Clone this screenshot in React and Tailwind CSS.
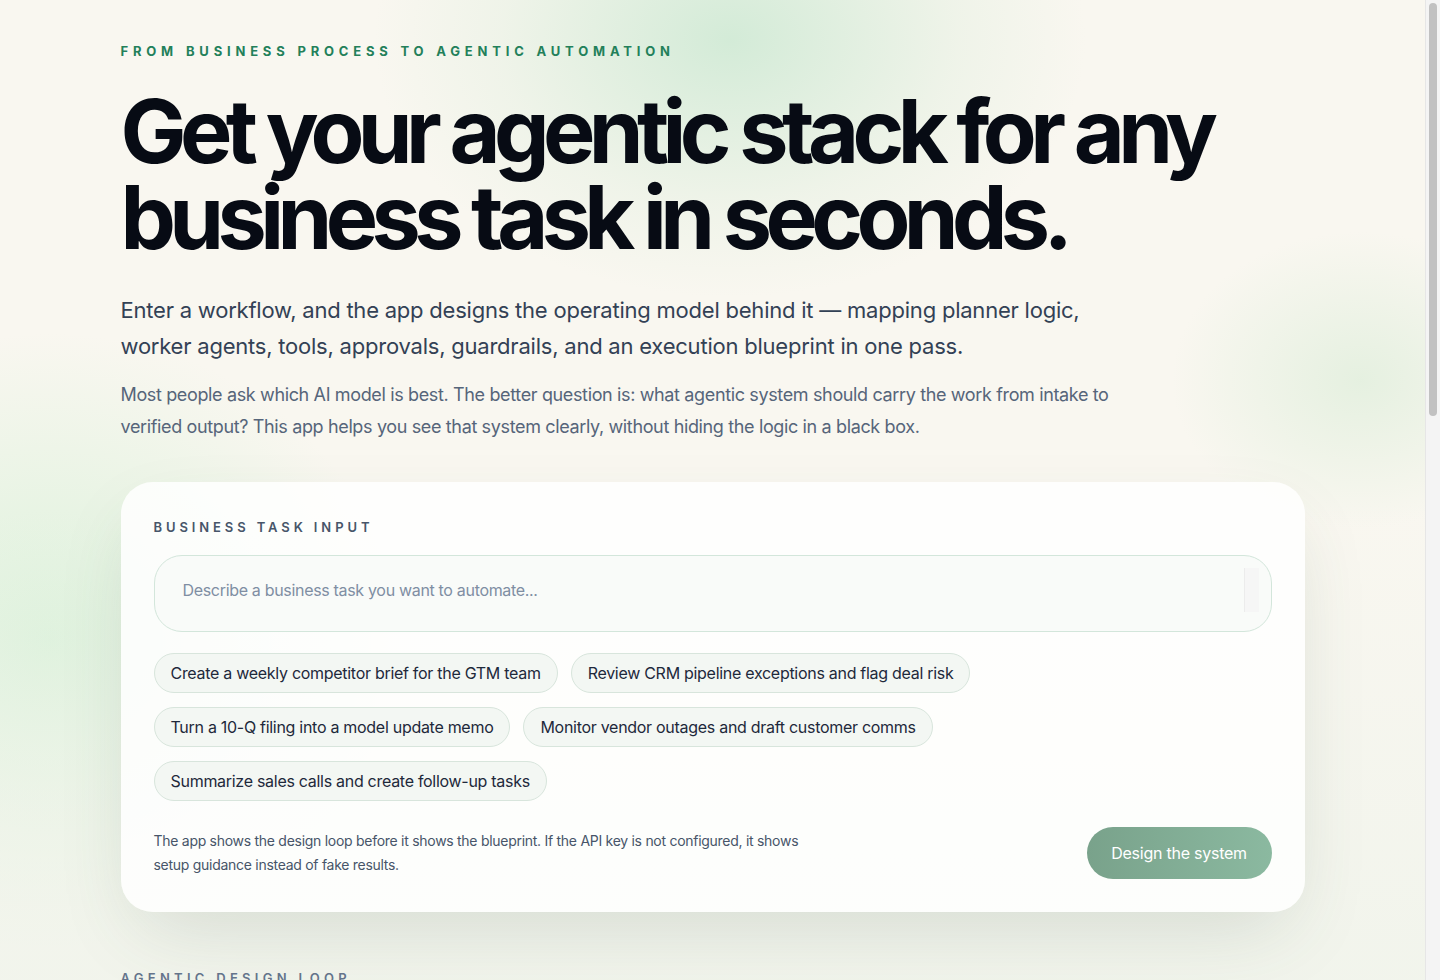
const examples = [
  'Create a weekly competitor brief for the GTM team',
  'Review CRM pipeline exceptions and flag deal risk',
  'Turn a 10-Q filing into a model update memo',
  'Monitor vendor outages and draft customer comms',
  'Summarize sales calls and create follow-up tasks',
]

export default function App() {
  return (
    <div
      className="relative min-h-[2300px] overflow-hidden bg-[#f9f7f0] pr-[15px] text-slate-900"
      style={{ fontFamily: 'Inter, "Liberation Sans", sans-serif' }}
    >
      {/* soft background glows */}
      <div className="pointer-events-none absolute -top-[220px] left-[370px] h-[520px] w-[720px] rounded-full bg-[radial-gradient(ellipse_at_center,_rgba(180,225,195,0.55)_0%,_rgba(200,230,205,0.2)_45%,_transparent_70%)]" />
      <div className="pointer-events-none absolute top-[330px] -left-[300px] h-[620px] w-[700px] rounded-full bg-[radial-gradient(ellipse_at_center,_rgba(200,238,205,0.6)_0%,_transparent_70%)]" />
      <div className="pointer-events-none absolute top-[230px] left-[1170px] h-[300px] w-[380px] rounded-full bg-[radial-gradient(ellipse_at_center,_rgba(205,232,205,0.45)_0%,_transparent_70%)]" />
      <div className="pointer-events-none absolute top-[500px] left-0 right-0 h-[700px] bg-gradient-to-b from-transparent to-[#eef3ea]" />

      <main className="relative mx-auto w-[1184px] pt-[42px]">
        <p className="text-[13px] font-bold uppercase tracking-[0.37em] text-[#23805a]">
          From business process to agentic automation
        </p>

        <h1 className="mt-[26px] text-[88px] font-bold leading-[86px] tracking-[-0.075em] text-[#070b14]">
          Get your agentic stack for any
          <br />
          business task in seconds.
        </h1>

        <p className="mt-[32px] max-w-[980px] text-[22px] leading-[36px] tracking-[-0.01em] text-[#334155]">
          Enter a workflow, and the app designs the operating model behind it — mapping planner logic,
          worker agents, tools, approvals, guardrails, and an execution blueprint in one pass.
        </p>

        <p className="mt-[15px] max-w-[1010px] text-[18px] leading-[32px] tracking-[-0.02em] text-[#56657a]">
          Most people ask which AI model is best. The better question is: what agentic system should carry the
          work from intake to verified output? This app helps you see that system clearly, without hiding the
          logic in a black box.
        </p>

        <section className="mt-[39px] rounded-[32px] bg-white/85 px-[33px] pb-[33px] pt-[36px] shadow-[0_30px_80px_-20px_rgba(60,90,70,0.18)]">
          <p className="text-[13px] font-semibold uppercase tracking-[0.3em] text-[#475569]">
            Business task input
          </p>

          <div className="relative mt-[18px]">
            <textarea
              rows={1}
              placeholder="Describe a business task you want to automate..."
              className="block h-[77px] w-full resize-none overflow-hidden rounded-[28px] border border-[#d3e6db] bg-[#f9fbf9] px-[28px] pt-[22px] text-[16px] leading-[24px] tracking-[-0.02em] text-slate-700 outline-none placeholder:text-[#7f8ea3]"
            />
            <span className="absolute right-[13px] top-[13px] h-[44px] w-[15px] border-l border-[#ececec] bg-[#f6f6f6]" />
          </div>

          <div className="mt-[21px] flex max-w-[900px] flex-wrap gap-x-[13px] gap-y-[14px]">
            {examples.map((t) => (
              <button
                key={t}
                className="h-[40px] rounded-full border border-[#d8e5dc] bg-[#f3f7f3] px-[16px] text-[16px] tracking-[-0.018em] text-[#1e293b]"
              >
                {t}
              </button>
            ))}
          </div>

          <div className="mt-[26px] flex items-center justify-between">
            <p className="max-w-[660px] text-[14px] leading-[24px] tracking-[-0.02em] text-[#475569]">
              The app shows the design loop before it shows the blueprint. If the API key is not configured, it shows
              setup guidance instead of fake results.
            </p>
            <button className="h-[52px] w-[185px] rounded-full bg-gradient-to-r from-[#79a28b] to-[#8bb9a0] text-[16px] tracking-[-0.015em] text-white">
              Design the system
            </button>
          </div>
        </section>

        <p className="mt-[57px] text-[13px] font-semibold uppercase tracking-[0.33em] text-[#64748b]">
          Agentic design loop
        </p>
      </main>

      {/* page scrollbar */}
      <div className="fixed right-0 top-0 h-screen w-[15px] border-l border-[#e6e6e6] bg-[#f4f4f4] p-[3px]">
        <div className="h-[413px] rounded-full bg-[#c1c1c1]" />
      </div>
    </div>
  )
}
